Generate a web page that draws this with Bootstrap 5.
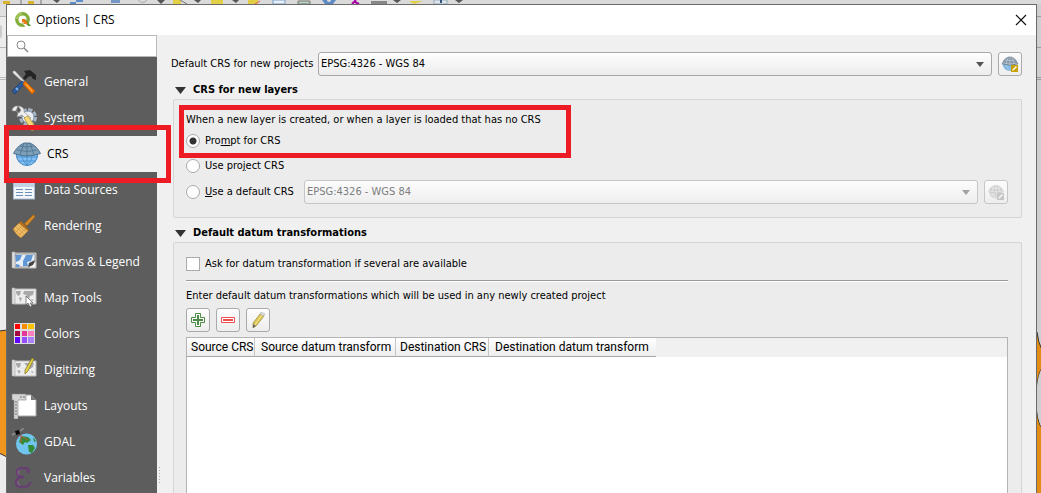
<!DOCTYPE html>
<html lang="en">
<head>
<meta charset="utf-8">
<meta name="viewport" content="width=device-width, initial-scale=1">
<title>Options | CRS</title>
<link href="https://cdn.jsdelivr.net/npm/bootstrap@5.3.0/dist/css/bootstrap.min.css" rel="stylesheet">
<style>
  :root { --ui: "Open Sans", "Noto Sans", sans-serif; --form: "DejaVu Sans Condensed", "DejaVu Sans", sans-serif; }
  body { background: #e4e4e4; color: #000; font: 11px/16px var(--form); }
  svg { display: block; flex: none; }
  .strip-top { height: 4px; width: 100%; background: #dadada; overflow: hidden; }
  .strip-side { flex: none; width: 6px; overflow: hidden; }
  .strip-side.end { width: 4px; }
  .dialog { border: 1px solid #6a6a6a; border-bottom: 0; background: #f0f0f0; min-width: 0; }
  .titlebar { height: 30px; background: #fff; font: 12px/18px var(--ui); padding: 0 9px 0 8px; }
  .titlebar h1 { font: inherit; margin: 0 0 0 5px; }
  .plain { background: none; border: 0; padding: 0; color: inherit; }
  .sidebar { width: 150px; flex: none; background: #5d5d5d; font: 12px/18px var(--ui); }
  .search { background: #fff; border: 1px solid #b9b9b9; height: 22px; padding: 0 8px; }
  .search input { border: 0; outline: 0; background: none; width: 100%; height: 18px; padding: 0 4px; }
  .entries { padding-top: 7px; }
  .entry { height: 36px; padding: 0 4px; gap: 7px; color: #fff; text-align: left; width: 100%; border: 0; background: none; }
  .entry.current { background: #f0f0f0; color: #000; gap: 6px; padding: 0 6px; }
  .entry-box { position: relative; }
  .marker { position: absolute; border: 5px solid #ed1c24; pointer-events: none; z-index: 5; }
  .marker-entry { inset: -11px -14px -11px -3px; }
  .marker-prompt { left: -7px; top: -7px; bottom: -9px; width: 392px; }
  .splitter { width: 7px; flex: none; }
  .page { padding: 17px 14px 0 7px; min-width: 0; }
  .combo { height: 24px; border: 1px solid #a8a8a8; border-radius: 3px; color: #000; padding: 0 2px; appearance: none; min-width: 0;
    background: url("data:image/svg+xml,%3Csvg xmlns='http://www.w3.org/2000/svg' width='8' height='5'%3E%3Cpath d='M0 0h8L4 5z' fill='%23555'/%3E%3C/svg%3E") no-repeat right 7px center, linear-gradient(#fefefe, #ececec); }
  .combo:disabled { border-color: #c6c6c6; color: #7d7d7d; opacity: 1;
    background: url("data:image/svg+xml,%3Csvg xmlns='http://www.w3.org/2000/svg' width='8' height='5'%3E%3Cpath d='M0 0h8L4 5z' fill='%23a2a2a2'/%3E%3C/svg%3E") no-repeat right 7px center, linear-gradient(#fcfcfc, #eeeeee); }
  .tool { width: 24px; height: 24px; flex: none; border: 1px solid #aaa; border-radius: 3px; padding: 0; background: linear-gradient(#fdfdfd, #ededed); display: flex; align-items: center; justify-content: center; }
  .combo + .tool { margin-left: 6px; }
  .tool:disabled { border-color: #c6c6c6; }
  .tool:disabled svg { filter: grayscale(1); opacity: .4; }
  .section-title { font: bold 11px/16px var(--form); margin: 6px 0 0; gap: 7px; padding-left: 4px; }
  .group-box { border: 1px solid #d5d5d5; border-radius: 2px; background: #ececec; margin: 1px 0 1px 2px; padding: 12px 13px 13px 12px; }
  .pick { appearance: none; width: 14px; height: 14px; margin: 0; flex: none; background: #fff; border: 1px solid #aaa; }
  .pick[type=radio] { border-radius: 50%; }
  .pick[type=radio]:checked { background: radial-gradient(circle, #333 3px, #fff 4px); }
  .choice { gap: 5px; }
  .rule { height: 2px; background: #9a9a9a; border-bottom: 1px solid #fff; margin: 8px 0 6px; }
  .grid-frame { border: 1px solid #b4b4b4; border-bottom: 0; background: #fff; min-height: 155px; }
  .grid { table-layout: fixed; width: 100%; border-collapse: separate; border-spacing: 0; }
  .grid th { height: 19px; padding: 1px 0 0 4px; font: 12px/17px Roboto, var(--ui); white-space: nowrap; background: linear-gradient(#fff, #ededed); border-right: 1px solid #c6c6c6; border-bottom: 1px solid #a6a6a6; }
  .grid th.wide { padding-left: 6px; }
  .grid th.last { border-right: 0; }
  .grid td { background: #f0f0f0; padding: 0; }
</style>
</head>
<body class="vh-100 overflow-hidden d-flex flex-column">
<svg class="strip-top" height="4" viewBox="0 0 1041 4" preserveAspectRatio="xMinYMin slice">
  <path d="M3 1h7v3H3zM28 1h6v3h-6z" fill="#d9b52e"/><path d="M70 2h6v2h-6zM76 0h7v2h-7z" fill="#5b8fca"/>
  <path d="M53 0h7l-3 3zM157 0h8l-4 4zM194 0h7l-3 3zM232 0h7l-3 3zM393 0h8l-4 3zM455 0h8l-4 3z" fill="#555"/>
  <path d="M111 0h9v3h-9z" fill="#7397c4"/><path d="M138 0q5 5 9 0" fill="none" stroke="#aaa"/><path d="M173 0h8v4h-8zM211 0h12v4h-12zM248 0h10v4h-10zM409 1h14l-9 3z" fill="#e3cf45"/>
  <path d="M180 0l7 4M21 0v4M41 0v4" stroke="#777"/><path d="M255 4l5-3" stroke="#d55"/>
  <path d="M273 0h12v4h-12z" fill="#e8f0f8" stroke="#7b9fc7"/><path d="M298 1h12v3h-12z" fill="#b9d1bf" stroke="#777"/>
  <path d="M322 0h14l-3 4h-8z" fill="#5b8ac4"/><circle cx="329" r="2" fill="#ddd"/><path d="M356 0l-4 4m3-2l4 2" stroke="#a0a" stroke-width="2"/>
  <path d="M371 1h16v3h-16z" fill="#888"/><path d="M434 0h13v4h-13z" fill="#dde7ef" stroke="#9ab"/><path d="M440 0h2v3h-2z" fill="#357"/>
</svg>
<div class="d-flex flex-grow-1">
  <svg class="strip-side" width="6" height="489" viewBox="0 0 6 489">
    <path fill="#ececec" d="M0 0h6v489H0z"/><path fill="#e0e0e0" d="M0 0h6v12H0z"/><path stroke="#b8b8b8" d="M0 12.500h6M0 43.500h6M0 73.500h6M0 75.500h6"/>
    <rect x="-3" y="21" width="5" height="13" rx="2" fill="#ccc"/>
    <path d="M-1 327l8-1v127l-8-4z" fill="#f0961e" stroke="#333"/>
  </svg>
  <main class="dialog flex-grow-1 d-flex flex-column">
    <header class="titlebar d-flex align-items-center">
      <svg width="16" height="16" viewBox="0 0 16 16"><circle cx="7.500" cy="7.500" r="5.700" fill="none" stroke="#83ac3b" stroke-width="3.400"/><path d="M2 7a6 6 0 0 1 5-5.500" fill="none" stroke="#a2c957" stroke-width="2"/><path d="M8 8l5 6h3L11 8z" fill="#589632"/><path d="M7 7h4l-1 1 3 3-2 2-3-3-1 1z" fill="#ee7913"/><path d="M8 12l3 3 2-1-2-2z" fill="#fff"/></svg>
      <h1 class="flex-grow-1">Options | CRS</h1>
      <button class="plain" aria-label="Close"><svg width="12" height="12" viewBox="0 0 12 12"><path d="M1 1l10 10M11 1L1 11" stroke="#111" stroke-width="1.200"/></svg></button>
    </header>
    <div class="d-flex flex-grow-1">
      <nav class="sidebar" aria-label="Options">
        <div class="search d-flex align-items-center">
          <svg width="13" height="13" viewBox="0 0 13 13" fill="none" stroke="#888"><circle cx="5" cy="5" r="4"/><path d="M8 8l4 4" stroke-width="1.500"/></svg>
          <input type="search" aria-label="Search options">
        </div>
        <div class="entries">
          <button class="entry d-flex align-items-center">
            <svg width="26" height="26" viewBox="0 0 26 26"><path d="M2 2l2 0 11 12-1 1L2 4z" fill="#e6e6e6" stroke="#999" stroke-width=".5"/><path d="M13 2l6-1 6 5 0 5-3-1-2-3-3 1-3 3-2-2 3-4z" fill="#242424"/><path d="M11 12l3 2L4 25 1 22z" fill="#2d5b9c" stroke="#173c70" stroke-width=".7"/><path d="M5 19l2 2" stroke="#86b2e6" stroke-width="2"/><path d="M14 12l10 10-3 3-9-10z" fill="#f57900" stroke="#c55800" stroke-width=".7"/><path d="M15 15l6 7" stroke="#ffbf70"/></svg>General</button>
          <button class="entry d-flex align-items-center">
            <svg width="26" height="26" viewBox="0 0 26 26"><circle cx="17" cy="12" r="7" fill="none" stroke="#a6b6c8" stroke-width="4" stroke-dasharray="4 1.500"/><circle cx="17" cy="12" r="6" fill="#e8edf2" stroke="#8395aa"/><path d="M7 1a5 5 0 0 0-6 5l4 0 2 2-1 4 5-2 6 6 3-3-7-6c1-4-3-6-6-6l3 4-2 3-3-2z" fill="#eee" stroke="#888" stroke-width=".6"/><path d="M13 13l4-2 8 12-4 3z" fill="#f5d97a" stroke="#b68a25" stroke-width=".7"/></svg>System</button>
          <div class="entry-box">
            <button class="entry current d-flex align-items-center" aria-current="page">
              <svg width="28" height="28" viewBox="0 0 28 28"><circle cx="14" cy="15" r="10.500" fill="#83bff2" stroke="#4088c4"/><path d="M3 17h22M5 21h18M9 14c0 5 2 9 5 11 3-2 5-6 5-11M14 14v11" stroke="#438cc9" fill="none" stroke-width=".8"/><path d="M11 3h6q7 3 10.500 10.500-7 2.500-13.500 2.500T.5 13.500Q4 6 11 3z" fill="#7d9fb8" stroke="#3f6481" stroke-width=".8"/><path d="M7 6q7 2 14 0M4 10q10 3 20 0M11 3L7 15M17 3l4 12M14 3v13" fill="none" stroke="#466e8d" stroke-width=".7"/></svg>CRS</button>
            <span class="marker marker-entry"></span>
          </div>
          <button class="entry d-flex align-items-center">
            <svg width="26" height="26" viewBox="0 0 26 26"><rect x="2.500" y="5" width="21" height="17" fill="#f4f7fa" stroke="#aabbd0"/><path fill="#c3d3e6" d="M3 6h20v4H3z"/><path d="M5 12.500h7m2 0h7M5 15.500h7m2 0h7M5 18.500h7m2 0h7" stroke="#6f8fb8" stroke-width="1.200"/></svg>Data Sources</button>
          <button class="entry d-flex align-items-center">
            <svg width="26" height="26" viewBox="0 0 26 26"><path d="M22 2q2-1 2 2l-8 9-3-2z" fill="#d08a29" stroke="#8d5410" stroke-width=".6"/><path d="M10 8l8 9-2 2-9-8z" fill="#b56c18"/><path d="M8 10l9 8-7 7Q5 22 2 16z" fill="#efbd68" stroke="#b47a27" stroke-width=".7"/><path d="M7 12l8 7M5 14l8 7M3 16l8 7M5 19l6-6M8 22l6-6" stroke="#c78c38" stroke-width=".6"/></svg>Rendering</button>
          <button class="entry d-flex align-items-center">
            <svg width="26" height="26" viewBox="0 0 26 26"><path d="M3 4h22v15H3z" fill="#f2f2f2" stroke="#bbb"/><path d="M4 5h20v8l-6 5H4z" fill="#e8eef5" stroke="#777" stroke-width=".7"/><path d="M4 6l7 0-2 5-4 2zM12 12l3-6 7 0-2 6-4 1 1 4-5 0zM5 15l4 1-1 2H5z" fill="#5f97d4"/><path d="M24 11l-2 5-5 2 1-4z" fill="#444"/><path d="M1 3h3v16H1z" fill="#ddd" stroke="#aaa" stroke-width=".6"/></svg>Canvas &amp; Legend</button>
          <button class="entry d-flex align-items-center">
            <svg width="26" height="26" viewBox="0 0 26 26"><path d="M3 4h22v15H3z" fill="#ededed" stroke="#bbb"/><path d="M5 6l5 0-1 4-2 1-2-3zM8 12l3 1-2 4zM13 6l10 0-1 4-3 1-1 3-3-4-3-1zM15 11l2 2-2 4zM20 14l3 1-2 1z" fill="#a9a9a9"/><path d="M1 3h3v16H1z" fill="#ddd" stroke="#aaa" stroke-width=".6"/><path d="M15 11v9l2-2 2 4 2-1-2-3h3z" fill="#fff" stroke="#555" stroke-width=".7"/></svg>Map Tools</button>
          <button class="entry d-flex align-items-center">
            <svg width="26" height="26" viewBox="0 0 26 26"><path fill="#ddd" d="M3 2h21v21H3z"/><path fill="#f00" d="M4 3h5v5H4z"/><path fill="#ff8c00" d="M11 3h5v5h-5z"/><path fill="#ffc400" d="M17 3h6v5h-6z"/><path fill="#a50042" d="M4 10h5v5H4z"/><path fill="#e43797" d="M11 10h5v5h-5z"/><path fill="#ff7fbd" d="M17 10h6v5h-6z"/><path fill="#6400ff" d="M4 16h5v6H4z"/><path fill="#964dff" d="M11 16h5v6h-5z"/><path fill="#a982ff" d="M17 16h6v6h-6z"/></svg>Colors</button>
          <button class="entry d-flex align-items-center">
            <svg width="26" height="26" viewBox="0 0 26 26"><path d="M3 4h22v15H3z" fill="#ededed" stroke="#bbb"/><path d="M5 6l5 0-1 4-2 1-2-3zM6 13l4 1-2 3zM13 6l10 0-1 4-3 2zM20 14l3 1-2 1z" fill="#a9a9a9"/><path d="M1 3h3v16H1z" fill="#ddd" stroke="#aaa" stroke-width=".6"/><path d="M21 1l2 1-6 12-3 3 0-4z" fill="#e4d14a" stroke="#756b20" stroke-width=".7"/></svg>Digitizing</button>
          <button class="entry d-flex align-items-center">
            <svg width="26" height="26" viewBox="0 0 26 26"><path d="M5 2h15l5 5v16H5z" fill="#fff" stroke="#aaa"/><path d="M20 2v5h5z" fill="#777"/><path d="M1 1h14v6H7v19H3V7H1z" fill="#d5d5d5" stroke="#888" stroke-width=".6"/><path d="M4 9h2M4 12h2M4 15h2M4 18h2M4 21h2M10 3v2M13 3v2" stroke="#555" stroke-width=".8"/></svg>Layouts</button>
          <button class="entry d-flex align-items-center">
            <svg width="26" height="28" viewBox="0 0 26 28"><circle cx="15.500" cy="16" r="10.500" fill="#6fc5ed"/><path d="M10 8l7 1 3 3-4 3-2-1-2 3-4-3zM17 17l5 0 2 3-3 5-3-1zM22 9l3 4-2 1z" fill="#338b39"/><path d="M10 15V7m0 1l7 4" stroke="#dc4a3d" stroke-width=".8"/><path d="M1 7l4-2M9 3l4-3" stroke="#848484" stroke-width="2"/><path d="M4 3l4-1 1 4-4 1z" fill="#080808"/></svg>GDAL</button>
          <button class="entry d-flex align-items-center">
            <svg width="26" height="26" viewBox="0 0 26 26"><path d="M18 7Q18 3 12 3q-6 0-6 4 0 5 7 5-8 0-8 6 0 4 7 4 6 0 7-4" fill="none" stroke="#673f70" stroke-width="2.500" stroke-linecap="round"/><circle cx="17" cy="6" r="1.500" fill="#673f70"/><path d="M8 5q-2 2 0 5M7 16q-1 3 2 4" fill="none" stroke="#a17aa9" stroke-width=".7"/></svg>Variables</button>
        </div>
      </nav>
      <div class="splitter"><svg width="7" height="449" viewBox="0 0 7 449"><path d="M2.500 432v17" stroke="#aaa" stroke-dasharray="1 2"/></svg></div>
      <section class="page flex-grow-1 d-flex flex-column">
        <div class="d-flex align-items-center">
          <label for="defcrs" style="width:147px">Default CRS for new projects</label>
          <select id="defcrs" class="combo flex-grow-1"><option>EPSG:4326 - WGS 84</option></select>
          <button class="tool" aria-label="Select CRS"><svg width="18" height="18" viewBox="0 0 18 18"><circle cx="8.500" cy="9" r="6.500" fill="#83bce9" stroke="#6a9cc8" stroke-width=".6"/><path d="M7 2h4q4 2 6 7-8 2.500-16 0Q3 4 7 2z" fill="#8798a6" stroke="#6c7d8b" stroke-width=".6"/><path d="M4 5q5 1 10 0M2 8q7 2 14 0M7 2L5 9M11 2l2 7M9 2v8M5 10l3 6" stroke="#c3d0da" fill="none" stroke-width=".6"/><path d="M10 10h7v7h-7z" fill="#c8a000"/><path d="M11 16l1-2 3-3 1 1-3 3z" fill="#fff"/></svg></button>
        </div>
        <h2 class="section-title d-flex align-items-center"><svg width="11" height="8" viewBox="0 0 11 8"><path d="M0 1h11L5.500 8z" fill="#333"/></svg>CRS for new layers</h2>
        <div class="group-box">
          <div class="position-relative">
            <p class="m-0" style="padding-bottom:5px">When a new layer is created, or when a layer is loaded that has no CRS</p>
            <label class="choice d-flex align-items-center"><input class="pick" type="radio" name="mode" checked><span>Pro<u>m</u>pt for CRS</span></label>
            <span class="marker marker-prompt"></span>
          </div>
          <label class="choice d-flex align-items-center" style="margin-top:9px"><input class="pick" type="radio" name="mode"><span>Use pro<u>j</u>ect CRS</span></label>
          <div class="d-flex align-items-center" style="margin-top:6px">
            <label class="choice d-flex align-items-center" style="width:118px"><input class="pick" type="radio" name="mode"><span><u>U</u>se a default CRS</span></label>
            <select class="combo flex-grow-1" aria-label="Default layer CRS" disabled><option>EPSG:4326 - WGS 84</option></select>
            <button class="tool" aria-label="Select layer CRS" disabled><svg width="18" height="18" viewBox="0 0 18 18"><circle cx="8.500" cy="9" r="6.500" fill="#83bce9"/><path d="M7 2h4q4 2 6 7-8 2.500-16 0Q3 4 7 2z" fill="#8798a6"/><path d="M4 5q5 1 10 0M2 8q7 2 14 0M7 2L5 9M11 2l2 7M9 2v8M5 10l3 6" stroke="#e3e8ec" fill="none" stroke-width=".6"/><path d="M10 10h7v7h-7z" fill="#a98b10"/><path d="M11 16l1-2 3-3 1 1-3 3z" fill="#fff"/></svg></button>
          </div>
        </div>
        <h2 class="section-title d-flex align-items-center"><svg width="11" height="8" viewBox="0 0 11 8"><path d="M0 1h11L5.500 8z" fill="#333"/></svg>Default datum transformations</h2>
        <div class="group-box flex-grow-1 d-flex flex-column border-bottom-0 pb-0 mb-0" style="padding-top:13px">
          <label class="choice d-flex align-items-center"><input class="pick" type="checkbox"><span>Ask for datum transformation if several are available</span></label>
          <div class="rule"></div>
          <p class="m-0">Enter default datum transformations which will be used in any newly created project</p>
          <div class="d-flex" style="gap:6px;margin:4px 0 5px">
            <button class="tool" aria-label="Add"><svg width="16" height="16" viewBox="0 0 16 16"><path d="M5.500 1.500h5v4h4v5h-4v4h-5v-4h-4v-5h4z" fill="#fff" stroke="#4c8a48"/><path d="M8 3v10M3 8h10" stroke="#4c8a48" stroke-width="2"/></svg></button>
            <button class="tool" aria-label="Remove"><svg width="16" height="16" viewBox="0 0 16 16"><path d="M1.500 5.500h13v5h-13z" fill="#fff" stroke="#ee4f50"/><path d="M3 8h10" stroke="#ee4f50" stroke-width="2"/></svg></button>
            <button class="tool" aria-label="Edit"><svg width="16" height="16" viewBox="0 0 16 16"><path d="M10 2l4 2-7 9-4 3 0-5z" fill="#dcc555" stroke="#8d8035" stroke-width=".6"/><path d="M12 3L5 13" stroke="#f6e89b"/><path d="M3 16v-4l3 2z" fill="#666"/><path d="M10 2l1-2 4 2-1 2z" fill="#ddd" stroke="#aaa" stroke-width=".5"/></svg></button>
          </div>
          <div class="grid-frame flex-grow-1">
            <table class="grid">
              <colgroup><col style="width:68px"><col style="width:141px"><col style="width:93px"><col style="width:167px"><col></colgroup>
              <thead><tr><th scope="col">Source CRS</th><th scope="col" class="wide">Source datum transform</th><th scope="col">Destination CRS</th><th scope="col" class="wide last">Destination datum transform</th><td></td></tr></thead>
            </table>
          </div>
        </div>
      </section>
    </div>
  </main>
  <svg class="strip-side end" width="4" height="489" viewBox="0 0 4 489">
    <path fill="#cfcfcf" d="M0 0h4v489H0z"/><path stroke="#999" d="M0 12.500h4M0 43.500h4M0 73.500h4M0 75.500h4"/>
    <path d="M0 328q1 10 5 18v18q-4 8-5 18v24q1 12 5 18v66H0z" fill="#e58c14"/><path d="M0 328q1 10 5 18M5 364q-4 6-5 18v24q1 14 5 18" fill="none" stroke="#333"/><path d="M4 366q-3 6-4 16v24q1 10 4 16z" fill="#cfcfcf"/>
  </svg>
</div>
<script src="https://cdn.jsdelivr.net/npm/bootstrap@5.3.0/dist/js/bootstrap.bundle.min.js"></script>
</body>
</html>
